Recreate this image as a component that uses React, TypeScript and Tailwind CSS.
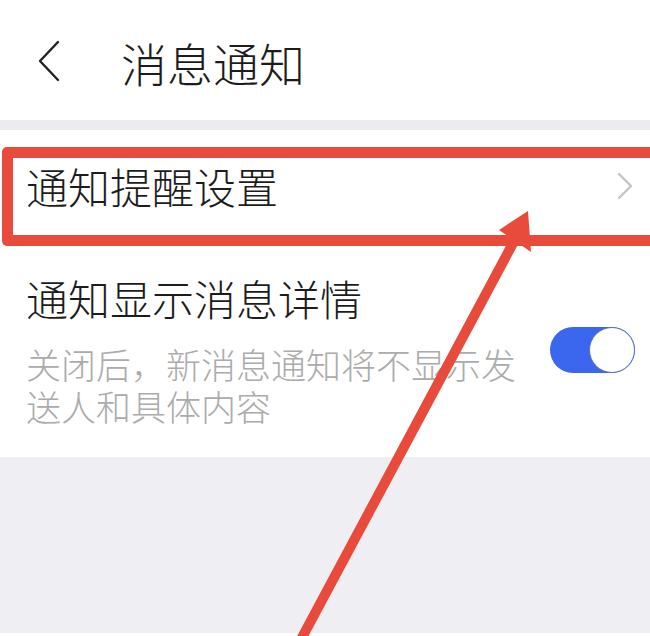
import React from "react";

export default function App() {
  const font = { fontFamily: '"Noto Sans CJK SC", "Noto Sans", sans-serif' };
  return (
    <div className="relative w-[650px] h-[636px] overflow-hidden bg-white flex flex-col font-light" style={font}>
      {/* Header */}
      <div className="h-[120px] flex items-center pl-[37px] shrink-0">
        <svg width="24" height="42" viewBox="0 0 24 42" className="mt-[2px]">
          <polyline points="21,2 3,21 21,40" fill="none" stroke="#222" strokeWidth="2.4" strokeLinecap="round" strokeLinejoin="round" />
        </svg>
        <span className="ml-[60px] text-[46px] leading-none text-[#1c1c1c] mt-[4px]">消息通知</span>
      </div>
      <div className="h-[10px] bg-[#ececef] shrink-0" />

      {/* Row 1 */}
      <div className="h-[112px] flex items-center justify-between pl-[26px] pr-[17px] shrink-0">
        <span className="text-[42px] leading-none text-[#1c1c1c]">通知提醒设置</span>
        <svg width="16" height="28" viewBox="0 0 16 28">
          <polyline points="2,2 14,14 2,26" fill="none" stroke="#c4c4c4" strokeWidth="2.4" strokeLinecap="round" strokeLinejoin="round" />
        </svg>
      </div>

      {/* Row 2 */}
      <div className="h-[215px] flex items-center justify-between pl-[26px] pr-[15px] shrink-0">
        <div className="flex flex-col">
          <span className="text-[42px] leading-[50px] text-[#1c1c1c]">通知显示消息详情</span>
          <p className="mt-[20px] w-[500px] text-[35px] leading-[42px] text-[#ababab]">
            关闭后，新消息通知将不显示发送人和具体内容
          </p>
        </div>
        <div className="w-[85px] h-[46px] rounded-full bg-[#3b66ee] flex items-center justify-end">
          <div className="w-[46px] h-[46px] rounded-full bg-white border-[1.5px] border-[#5b70c4]" />
        </div>
      </div>

      {/* Bottom gray */}
      <div className="flex-1 bg-[#efeff3]" />
      <div className="h-[3px] bg-white shrink-0" />

      {/* Red highlight box */}
      <div className="absolute left-[2px] top-[147px] w-[660px] h-[99px] border-[11px] border-[#e84b3b] rounded-[5px] pointer-events-none" />

      {/* Red arrow */}
      <svg className="absolute inset-0 pointer-events-none" width="650" height="636" viewBox="0 0 650 636">
        <line x1="298" y1="645" x2="519" y2="232" stroke="#e84b3b" strokeWidth="10" strokeLinecap="round" />
        <polygon points="528,211 499,230 531,252" fill="#e84b3b" />
      </svg>
    </div>
  );
}
